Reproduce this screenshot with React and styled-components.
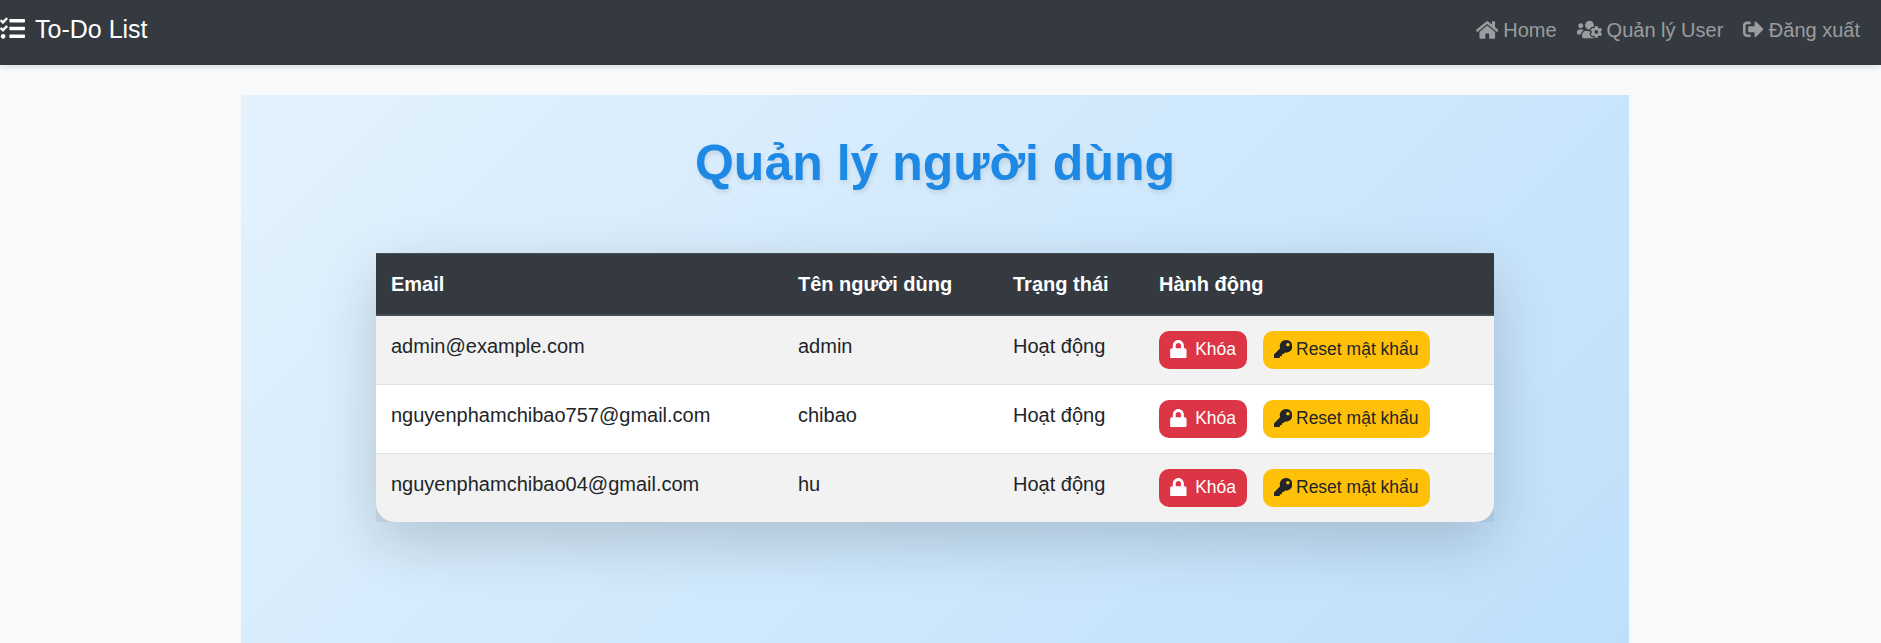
import React from "react";
import styled, { createGlobalStyle } from "styled-components";
import { FaUsersCog, FaSignOutAlt, FaLock, FaKey } from "react-icons/fa";

const GlobalStyle = createGlobalStyle`
  *, *::before, *::after { box-sizing: border-box; }
  body {
    margin: 0;
    background: #f8f9fb;
    color: #212529;
    font-family: Arial, "Liberation Sans", sans-serif;
    font-size: 20px;
    line-height: 1.5;
  }
`;

const Page = styled.div`
  height: 643px;
  overflow: hidden;
`;

const Navbar = styled.nav`
  display: flex;
  align-items: center;
  justify-content: space-between;
  height: 65px;
  padding: 0 21px 5px 0;
  background: #343a40;
  box-shadow: 0 2.5px 5px rgba(0, 0, 0, 0.1);
`;

const Brand = styled.a`
  display: flex;
  align-items: center;
  gap: 10px;
  color: #fff;
  font-size: 25px;

  svg { margin-bottom: 3px; }
`;

const NavLinks = styled.div`
  display: flex;
  gap: 20px;
`;

const NavLink = styled.a`
  display: flex;
  align-items: center;
  gap: 5px;
  color: rgba(255, 255, 255, 0.5);

  svg { margin-bottom: 1px; }
`;

const Panel = styled.main`
  width: 1388px;
  height: 740px;
  margin: 30px 0 0 241px;
  padding: 38px 135px 0;
  background: linear-gradient(135deg, #e3f2fd, #bbdefb);
`;

const Title = styled.h1`
  margin: 0 0 60px;
  color: #1e88e5;
  font-size: 50px;
  line-height: 60px;
  text-align: center;
  text-shadow: 1.25px 2.5px 5px rgba(0, 0, 0, 0.1);
`;

const Table = styled.table`
  width: 1118px;
  table-layout: fixed;
  border-collapse: collapse;
  background: #fff;
  border-radius: 18.75px;
  box-shadow: 0 20px 60px rgba(0, 0, 0, 0.175);
`;

const Col = styled.col`
  width: ${(p) => p.$width}px;
`;

const HeadCell = styled.th`
  height: 61px;
  padding: 0 15px;
  border-top: 1px solid #454d55;
  border-bottom: 2px solid #454d55;
  background: #343a40;
  color: #fff;
  text-align: left;
`;

const Row = styled.tr`
  &:nth-child(odd) { background: rgba(0, 0, 0, 0.05); }
  & + & td { border-top: 1px solid #dee2e6; }
`;

const Cell = styled.td`
  height: 69px;
  padding: 15px;
  vertical-align: top;
`;

const Actions = styled.div`
  display: flex;
  gap: 16px;
`;

const Button = styled.button`
  display: flex;
  align-items: center;
  gap: ${(p) => (p.$danger ? 8 : 4)}px;
  width: ${(p) => (p.$danger ? 88 : 167)}px;
  height: 38px;
  padding: 0 0 0 ${(p) => (p.$danger ? 9.5 : 10.5)}px;
  border: 0;
  border-radius: 10px;
  background: ${(p) => (p.$danger ? "#dc3545" : "#ffc107")};
  color: ${(p) => (p.$danger ? "#fff" : "#212529")};
  font: 17.5px/1.5 Arial, "Liberation Sans", sans-serif;
  white-space: nowrap;

  svg { flex: none; margin-bottom: 1px; }
`;

function TasksIcon() {
  return (
    <svg width="25" height="25" viewBox="0 0 512 512" fill="currentColor" aria-hidden="true">
      <path d="M208 132h288c8.8 0 16-7.2 16-16V76c0-8.8-7.2-16-16-16H208c-8.8 0-16 7.2-16 16v40c0 8.8 7.2 16 16 16zm0 160h288c8.8 0 16-7.2 16-16v-40c0-8.8-7.2-16-16-16H208c-8.8 0-16 7.2-16 16v40c0 8.8 7.2 16 16 16zm0 160h288c8.8 0 16-7.2 16-16v-40c0-8.8-7.2-16-16-16H208c-8.8 0-16 7.2-16 16v40c0 8.8 7.2 16 16 16zM64 368c-26.500 0-48.600 21.500-48.600 48s22.100 48 48.600 48 48-21.500 48-48-21.500-48-48-48zm92.500-299l-72.200 72.200-15.600 15.600c-4.700 4.700-12.900 4.700-17.600 0L3.500 109.400c-4.700-4.700-4.700-12.300 0-17l15.700-15.700c4.700-4.700 12.300-4.700 17 0l22.700 22.100 63.700-63.300c4.700-4.700 12.300-4.700 17 0l17 16.500c4.600 4.700 4.600 12.300-.1 17zm0 159.600l-72.200 72.200-15.700 15.700c-4.700 4.700-12.900 4.700-17.600 0L3.500 269c-4.700-4.700-4.700-12.300 0-17l15.700-15.700c4.700-4.700 12.300-4.700 17 0l22.700 22.100 63.700-63.700c4.700-4.700 12.300-4.700 17 0l17 17c4.600 4.600 4.600 12.200-.1 16.900z" />
    </svg>
  );
}

function HomeIcon() {
  return (
    <svg width="22.5" height="20" viewBox="0 0 576 512" fill="currentColor" aria-hidden="true">
      <path d="M488 312.7V456c0 13.300-10.700 24-24 24H348c-6.600 0-12-5.400-12-12V356c0-6.600-5.400-12-12-12h-72c-6.600 0-12 5.400-12 12v112c0 6.600-5.400 12-12 12H112c-13.300 0-24-10.700-24-24V312.700c0-3.600 1.600-7 4.400-9.300l188-154.800c4.400-3.600 10.800-3.600 15.300 0l188 154.800c2.700 2.300 4.300 5.700 4.300 9.300zm83.600-60.900L488 182.900V44.400c0-6.600-5.400-12-12-12h-56c-6.600 0-12 5.400-12 12V117l-89.500-73.700c-17.700-14.600-43.300-14.600-61 0L4.400 251.800c-5.100 4.200-5.800 11.800-1.600 16.900l25.500 31c4.200 5.100 11.800 5.800 16.900 1.600l235.200-193.700c4.400-3.600 10.800-3.600 15.300 0l235.200 193.700c5.100 4.200 12.700 3.500 16.900-1.600l25.500-31c4.200-5.200 3.400-12.700-1.700-16.900z" />
    </svg>
  );
}

const users = [
  { email: "admin@example.com", name: "admin" },
  { email: "nguyenphamchibao757@gmail.com", name: "chibao" },
  { email: "nguyenphamchibao04@gmail.com", name: "hu" },
];

export default function App() {
  return (
    <Page>
      <GlobalStyle />
      <Navbar>
        <Brand><TasksIcon />To-Do List</Brand>
        <NavLinks>
          <NavLink><HomeIcon />Home</NavLink>
          <NavLink><FaUsersCog size={25} />Quản lý User</NavLink>
          <NavLink><FaSignOutAlt size={20.5} />Đăng xuất</NavLink>
        </NavLinks>
      </Navbar>
      <Panel>
        <Title>Quản lý người dùng</Title>
        <Table>
          <colgroup>
            <Col $width={407} />
            <Col $width={215} />
            <Col $width={146} />
            <Col $width={350} />
          </colgroup>
          <thead>
            <tr>
              <HeadCell>Email</HeadCell>
              <HeadCell>Tên người dùng</HeadCell>
              <HeadCell>Trạng thái</HeadCell>
              <HeadCell>Hành động</HeadCell>
            </tr>
          </thead>
          <tbody>
            {users.map((user) => (
              <Row key={user.email}>
                <Cell>{user.email}</Cell>
                <Cell>{user.name}</Cell>
                <Cell>Hoạt động</Cell>
                <Cell>
                  <Actions>
                    <Button $danger><FaLock size={18.7} />Khóa</Button>
                    <Button><FaKey size={18.5} />Reset mật khẩu</Button>
                  </Actions>
                </Cell>
              </Row>
            ))}
          </tbody>
        </Table>
      </Panel>
    </Page>
  );
}
